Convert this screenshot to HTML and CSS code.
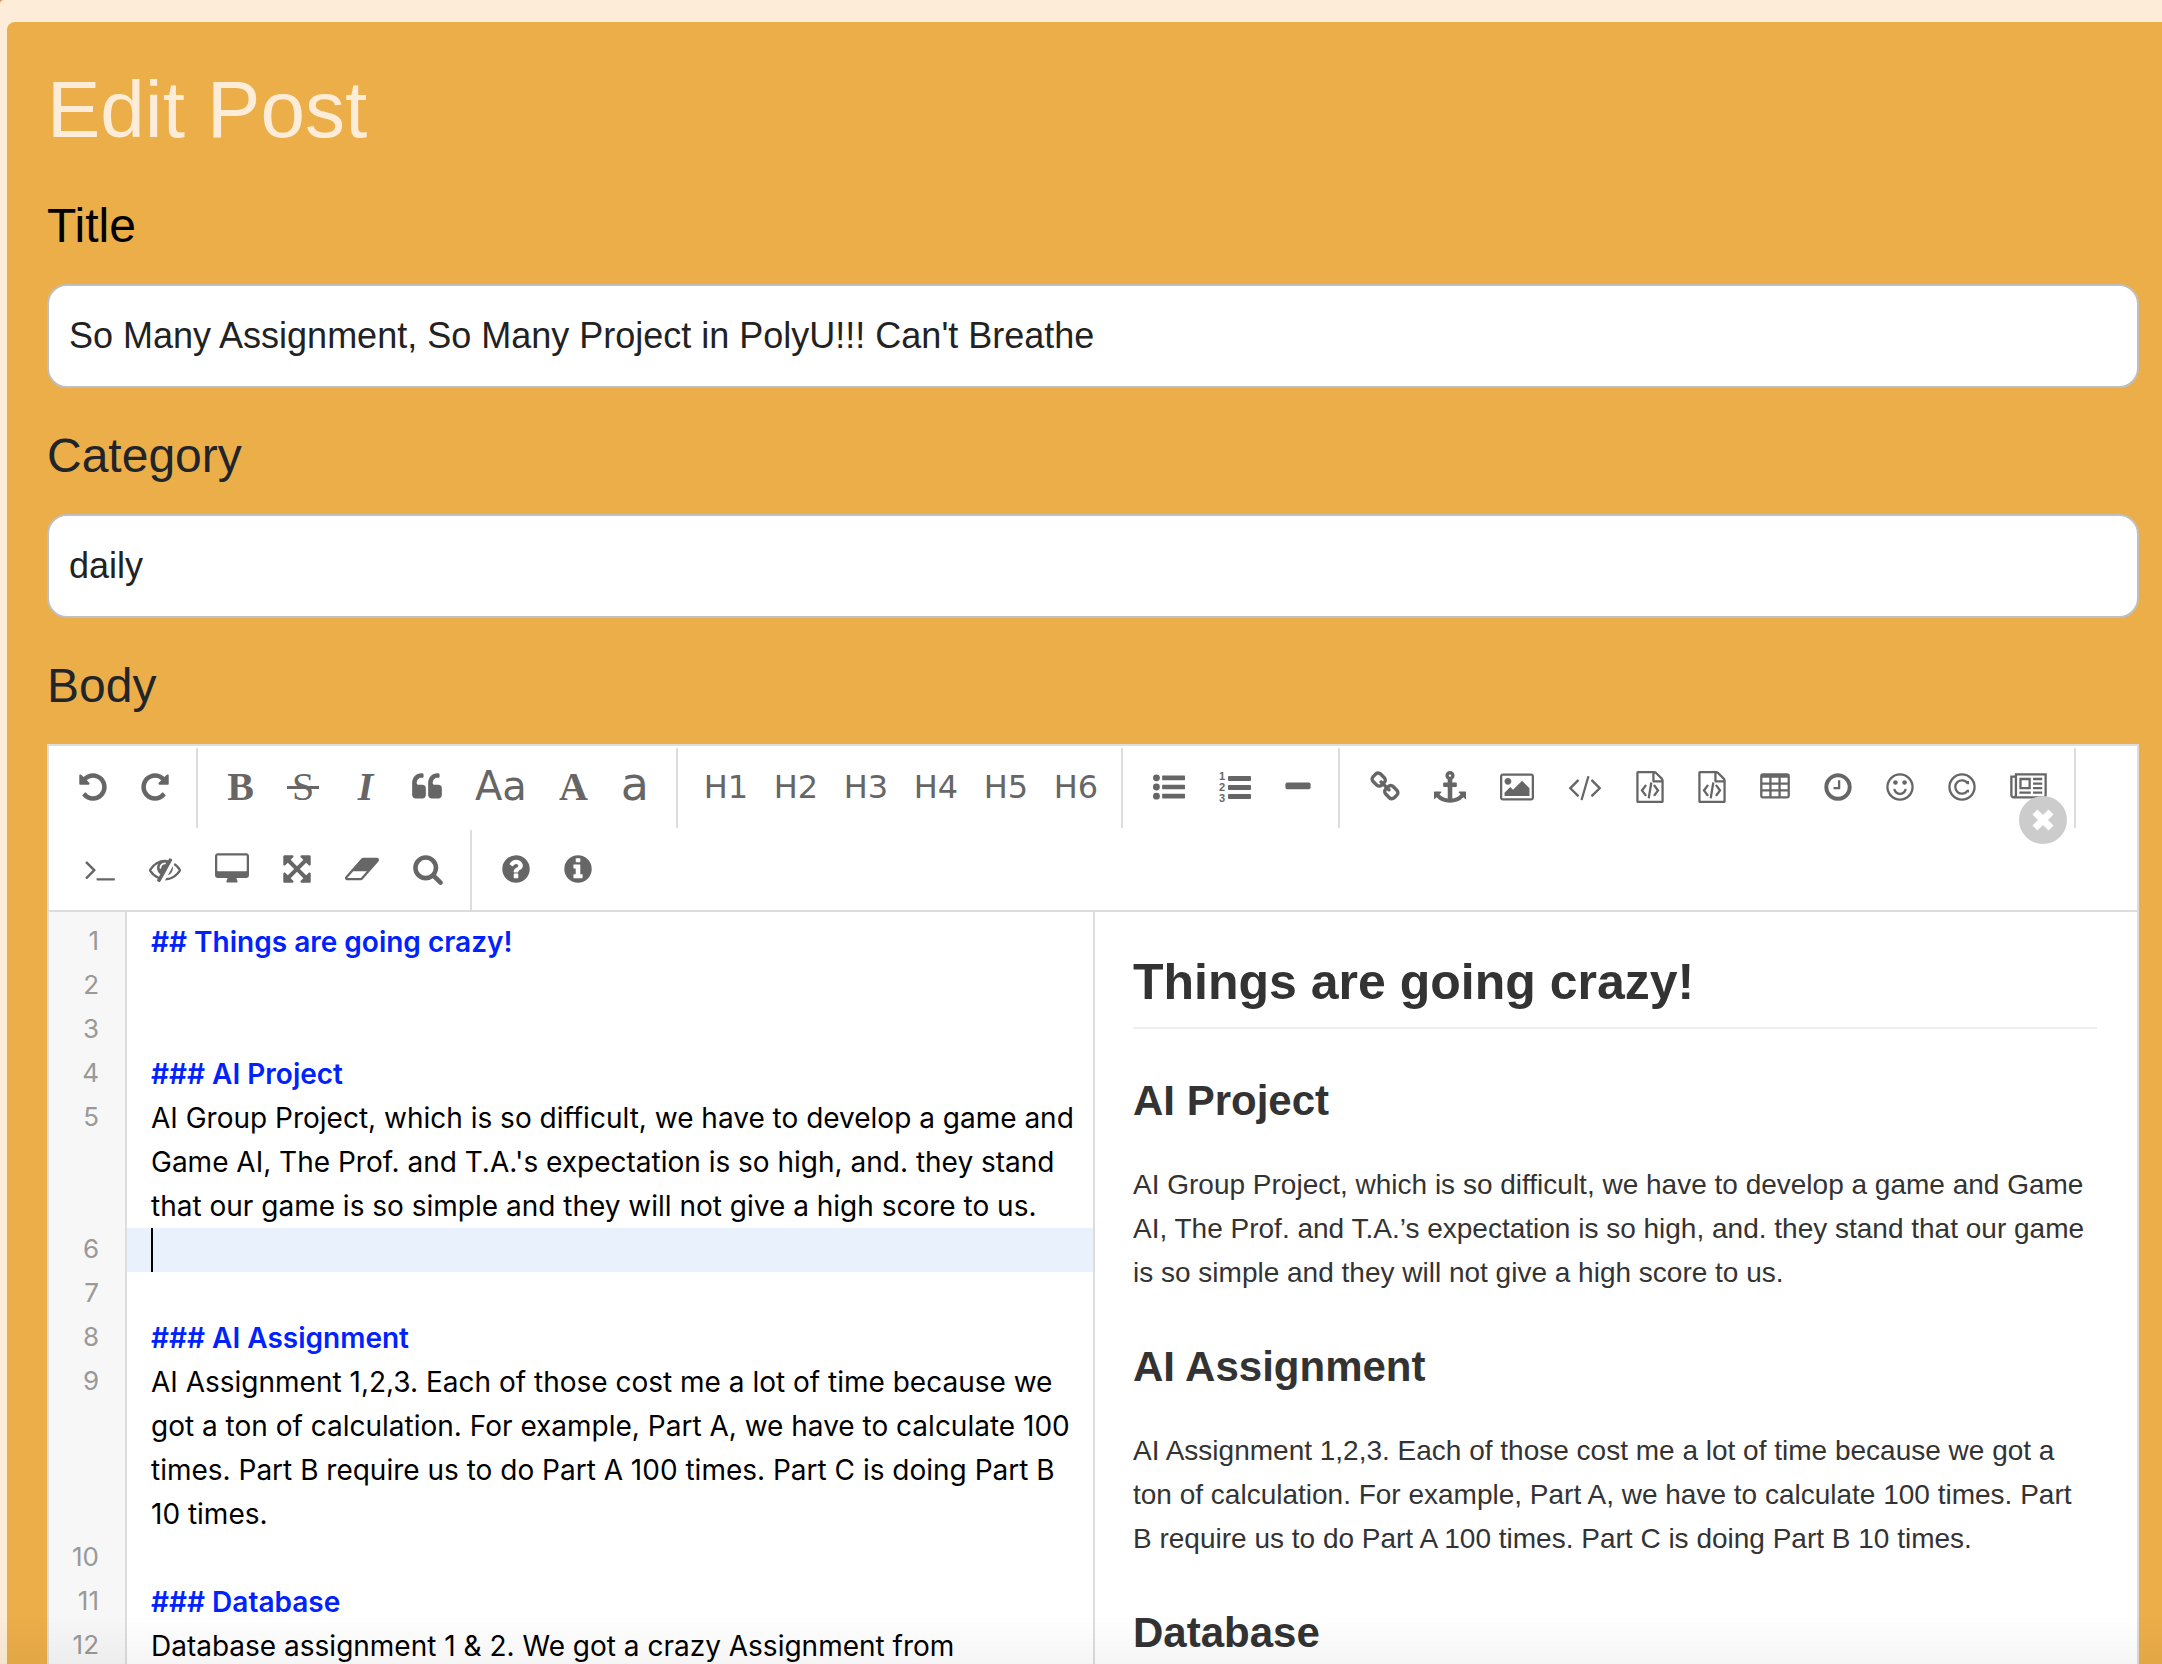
FILE: index.html
```html
<!DOCTYPE html>
<html lang="en">
<head>
<meta charset="utf-8">
<title>Edit Post</title>
<link rel="stylesheet" href="styles.css">
</head>
<body>
<div class="page">
<main class="card">
  <h1 class="card-heading">Edit Post</h1>
  <form class="post-form">
    <label class="field-label field-label--title" for="title">Title</label>
    <input class="field-input" id="title" type="text" value="So Many Assignment, So Many Project in PolyU!!! Can't Breathe">
    <label class="field-label" for="category">Category</label>
    <input class="field-input" id="category" type="text" value="daily">
    <h2 class="field-label">Body</h2>

    <section class="editor" aria-label="Body">
      <div class="toolbar" role="toolbar" aria-label="Formatting">
        <div class="group">
          <button type="button" class="tool" aria-label="Undo"><svg class="w28" viewBox="128 0 1536 1792"><path d="M1664 896q0 156-61 298t-164 245-245 164-298 61q-172 0-327-72.500t-264-204.500q-7-10-6.500-22.500t8.500-20.500l137-138q10-9 25-9 16 2 23 12 73 95 179 147t225 52q104 0 198.500-40.500t163.500-109.500 109.500-163.500 40.500-198.500-40.500-198.500-109.500-163.500-163.500-109.500-198.500-40.500q-98 0-188 35.500t-160 101.500l137 138q31 30 14 69-17 40-59 40h-448q-26 0-45-19t-19-45v-448q0-42 40-59 39-17 69 14l130 129q107-101 244.500-156.500t284.500-55.500q156 0 298 61t245 164 164 245 61 298z"/></svg></button>
          <button type="button" class="tool" aria-label="Redo"><svg class="w28" viewBox="128 0 1536 1792"><path d="M1664 256v448q0 26-19 45t-45 19h-448q-42 0-59-40-17-39 14-69l138-138q-148-137-349-137-104 0-198.500 40.500t-163.500 109.500-109.500 163.500-40.500 198.500 40.500 198.500 109.500 163.500 163.500 109.500 198.500 40.500q119 0 225-52t179-147q7-10 23-12 15 0 25 9l137 138q9 8 9.500 20.500t-7.500 22.500q-109 132-264 204.500t-327 72.500q-156 0-298-61t-245-164-164-245-61-298 61-298 164-245 245-164 298-61q147 0 284.500 55.500t244.500 156.500l130-129q29-31 70-14 39 17 39 59z"/></svg></button>
        </div>
        <div class="group">
          <button type="button" class="tool tool--serif" aria-label="Bold">B</button>
          <button type="button" class="tool tool--serif tool--strike" aria-label="Strikethrough">S</button>
          <button type="button" class="tool tool--serif tool--italic" aria-label="Italic">I</button>
          <button type="button" class="tool" aria-label="Quote"><svg class="w30" viewBox="64 0 1664 1792"><path d="M832 960v384q0 80-56 136t-136 56h-384q-80 0-136-56t-56-136v-704q0-104 40.500-198.500t109.500-163.500 163.500-109.500 198.500-40.500h64q26 0 45 19t19 45v128q0 26-19 45t-45 19h-64q-106 0-181 75t-75 181v32q0 40 28 68t68 28h224q80 0 136 56t56 136zm896 0v384q0 80-56 136t-136 56h-384q-80 0-136-56t-56-136v-704q0-104 40.500-198.500t109.500-163.500 163.500-109.500 198.500-40.500h64q26 0 45 19t19 45v128q0 26-19 45t-45 19h-64q-106 0-181 75t-75 181v32q0 40 28 68t68 28h224q80 0 136 56t56 136z"/></svg></button>
          <button type="button" class="tool tool--case" aria-label="Capitalize words">Aa</button>
          <button type="button" class="tool tool--serif" aria-label="Uppercase">A</button>
          <button type="button" class="tool tool--lower" aria-label="Lowercase">a</button>
        </div>
        <div class="group">
          <button type="button" class="tool tool--heading">H1</button>
          <button type="button" class="tool tool--heading">H2</button>
          <button type="button" class="tool tool--heading">H3</button>
          <button type="button" class="tool tool--heading">H4</button>
          <button type="button" class="tool tool--heading">H5</button>
          <button type="button" class="tool tool--heading">H6</button>
        </div>
        <div class="group">
          <button type="button" class="tool" aria-label="Bulleted list"><svg class="w32" viewBox="0 0 1792 1792"><circle cx="192" cy="384" r="192"/><circle cx="192" cy="896" r="192"/><circle cx="192" cy="1408" r="192"/><rect x="512" y="256" width="1280" height="256" rx="32"/><rect x="512" y="768" width="1280" height="256" rx="32"/><rect x="512" y="1280" width="1280" height="256" rx="32"/></svg></button>
          <button type="button" class="tool" aria-label="Numbered list"><svg class="w32" viewBox="0 0 32 32"><rect x="9" y="5" width="23" height="5" rx="1"/><rect x="9" y="14" width="23" height="5" rx="1"/><rect x="9" y="23" width="23" height="5" rx="1"/><text class="digit" x="0" y="9">1</text><text class="digit" x="0" y="20">2</text><text class="digit" x="0" y="31">3</text></svg></button>
          <button type="button" class="tool" aria-label="Horizontal rule"><svg class="w26" viewBox="192 0 1408 1792"><rect x="192" y="640" width="1408" height="384" rx="96"/></svg></button>
        </div>
        <div class="group">
          <button type="button" class="tool" aria-label="Link"><svg class="w30" viewBox="64 0 1664 1792"><path d="M1520 1216q0-40-28-68l-208-208q-28-28-68-28-42 0-72 32 3 3 19 18.500t21.500 21.500 15 19 13 25.500 3.500 27.500q0 40-28 68t-68 28q-15 0-27.500-3.500t-25.500-13-19-15-21.500-21.500-18.500-19q-33 31-33 73 0 40 28 68l206 207q27 27 68 27 40 0 68-26l147-146q28-28 28-67zm-703-705q0-40-28-68l-206-207q-28-28-68-28-39 0-68 27l-147 146q-28 28-28 67 0 40 28 68l208 208q27 27 68 27 42 0 72-31-3-3-19-18.500t-21.500-21.500-15-19-13-25.500-3.500-27.500q0-40 28-68t68-28q15 0 27.500 3.500t25.500 13 19 15 21.500 21.500 18.500 19q33-31 33-73zm895 705q0 120-85 203l-147 146q-83 83-203 83-121 0-204-85l-206-207q-83-83-83-203 0-123 88-209l-88-88q-86 88-208 88-120 0-204-84l-208-208q-84-84-84-204t85-203l147-146q83-83 203-83 121 0 204 85l206 207q83 83 83 203 0 123-88 209l88 88q86-88 208-88 120 0 204 84l208 208q84 84 84 204z"/></svg></button>
          <button type="button" class="tool" aria-label="Anchor"><svg class="w32" viewBox="0 0 1792 1792"><path d="M960 256q0-26-19-45t-45-19-45 19-19 45 19 45 45 19 45-19 19-45zm832 928v352q0 22-20 30-8 2-12 2-12 0-23-9l-93-93q-119 143-318.500 226.500t-429.500 83.500-429.500-83.500-318.500-226.500l-93 93q-9 9-23 9-4 0-12-2-20-8-20-30v-352q0-14 9-23t23-9h352q22 0 30 20 8 19-7 35l-100 100q67 91 189.500 153.500t271.500 82.500v-647h-192q-26 0-45-19t-19-45v-128q0-26 19-45t45-19h192v-163q-58-34-93-92.500t-35-128.500q0-106 75-181t181-75 181 75 75 181q0 70-35 128.500t-93 92.500v163h192q26 0 45 19t19 45v128q0 26-19 45t-45 19h-192v647q149-20 271.500-82.500t189.500-153.500l-100-100q-15-16-7-35 8-20 30-20h352q14 0 23 9t9 23z"/></svg></button>
          <button type="button" class="tool" aria-label="Image"><svg class="w34" viewBox="64 0 1920 1792"><path d="M704 576q0 80-56 136t-136 56-136-56-56-136 56-136 136-56 136 56 56 136zm1024 384v448h-1408v-192l320-320 160 160 512-512zm96-704h-1600q-13 0-22.500 9.500t-9.500 22.500v1216q0 13 9.500 22.500t22.500 9.500h1600q13 0 22.500-9.500t9.500-22.500v-1216q0-13-9.500-22.500t-22.500-9.500zm160 32v1216q0 66-47 113t-113 47h-1600q-66 0-113-47t-47-113v-1216q0-66 47-113t113-47h1600q66 0 113 47t47 113z"/></svg></button>
          <button type="button" class="tool" aria-label="Inline code"><svg class="w34" viewBox="64 0 1920 1792"><path d="M681 1399l-50 50q-10 10-23 10t-23-10l-466-466q-10-10-10-23t10-23l466-466q10-10 23-10t23 10l50 50q10 10 10 23t-10 23l-393 393 393 393q10 10 10 23t-10 23zm591-1067l-373 1291q-4 13-15.500 19.500t-23.500 2.500l-62-17q-13-4-19.500-15.500t-2.500-24.500l373-1291q4-13 15.500-19.500t23.500-2.500l62 17q13 4 19.500 15.500t2.500 24.500zm657 651l-466 466q-10 10-23 10t-23-10l-50-50q-10-10-10-23t10-23l393-393-393-393q-10-10-10-23t10-23l50-50q10-10 23-10t23 10l466 466q10 10 10 23t-10 23z"/></svg></button>
          <button type="button" class="tool" aria-label="Preformatted text"><svg class="w28" viewBox="128 0 1536 1792"><path id="file-code" d="M1596 380q28 28 48 76t20 88v1152q0 40-28 68t-68 28h-1344q-40 0-68-28t-28-68v-1600q0-40 28-68t68-28h896q40 0 88 20t76 48zm-444-244v376h376q-10-29-22-41l-313-313q-12-12-41-22zm384 1528v-1024h-416q-40 0-68-28t-28-68v-416h-768v1536h1280zm-928-896q8-11 21-12.500t24 6.500l51 38q11 8 12.500 21t-6.500 24l-182 243 182 243q8 11 6.500 24t-12.500 21l-51 38q-11 8-24 6.500t-21-12.500l-226-301q-14-19 0-38zm802 301q14 19 0 38l-226 301q-8 11-21 12.500t-24-6.500l-51-38q-11-8-12.500-21t6.500-24l182-243-182-243q-8-11-6.500-24t12.500-21l51-38q11-8 24-6.500t21 12.500zm-620 461q-13-2-20.500-13t-5.500-24l138-831q2-13 13-20.500t24-5.500l63 10q13 2 20.500 13t5.500 24l-138 831q-2 13-13 20.500t-24 5.500z"/></svg></button>
          <button type="button" class="tool" aria-label="Code block"><svg class="w28" viewBox="128 0 1536 1792"><use href="#file-code"/></svg></button>
          <button type="button" class="tool" aria-label="Table"><svg class="w30" viewBox="64 0 1664 1792"><path fill-rule="evenodd" d="M224 128h1344q160 0 160 160v1088q0 160-160 160h-1344q-160 0-160-160v-1088q0-160 160-160zM192 384v256h384v-256zM704 384v256h384v-256zM1216 384v256h384v-256zM192 768v256h384v-256zM704 768v256h384v-256zM1216 768v256h384v-256zM192 1152v256h384v-256zM704 1152v256h384v-256zM1216 1152v256h384v-256z"/></svg></button>
          <button type="button" class="tool" aria-label="Date and time"><svg class="w28" viewBox="128 0 1536 1792"><path d="M1024 544v448q0 14-9 23t-23 9h-320q-14 0-23-9t-9-23v-64q0-14 9-23t23-9h224v-352q0-14 9-23t23-9h64q14 0 23 9t9 23zm416 352q0-148-73-273t-198-198-273-73-273 73-198 198-73 273 73 273 198 198 273 73 273-73 198-198 73-273zm224 0q0 209-103 385.500t-279.500 279.500-385.500 103-385.500-103-279.500-279.500-103-385.500 103-385.500 279.500-279.500 385.500-103 385.500 103 279.500 279.500 103 385.500z"/></svg></button>
          <button type="button" class="tool" aria-label="Emoji"><svg class="w28" viewBox="128 0 1536 1792"><circle class="ring" cx="896" cy="896" r="704"/><circle cx="640" cy="640" r="128"/><circle cx="1152" cy="640" r="128"/><path d="M1262 1075q-37 121-138 195t-228 74-228-74-138-195q-8-25 4-48.500t38-31.500q25-8 48.500 4t31.500 38q25 80 92.500 129.500t151.500 49.500 151.500-49.500 92.500-129.500q8-26 32-38t49-4 37 31.500 4 48.500z"/></svg></button>
          <button type="button" class="tool" aria-label="HTML entities"><svg class="w28" viewBox="128 0 1536 1792"><circle class="ring" cx="896" cy="896" r="704"/><path class="ring" d="M1210 690a376 376 0 1 0 0 412M1226 560v180M1226 1052v150"/></svg></button>
          <button type="button" class="tool" aria-label="Page break"><svg class="w37" viewBox="0 0 2048 1792"><path d="M1024 512h-384v384h384v-384zm128 640v128h-640v-128h640zm0-768v640h-640v-640h640zm640 768v128h-512v-128h512zm0-256v128h-512v-128h512zm0-256v128h-512v-128h512zm0-256v128h-512v-128h512zm-1536 960v-960h-128v960q0 26 19 45t45 19 45-19 19-45zm1664 0v-1088h-1536v1088q0 33-11 64h1483q26 0 45-19t19-45zm128-1216v1216q0 80-56 136t-136 56h-1664q-80 0-136-56t-56-136v-1088h256v-128h1792z"/></svg></button>
        </div>
        <div class="group group--view">
          <button type="button" class="tool" aria-label="Go to line"><svg class="w30" viewBox="64 0 1664 1792"><path d="M649 983l-466 466q-10 10-23 10t-23-10l-50-50q-10-10-10-23t10-23l393-393-393-393q-10-10-10-23t10-23l50-50q10-10 23-10t23 10l466 466q10 10 10 23t-10 23zm1079 457v64q0 14-9 23t-23 9h-960q-14 0-23-9t-9-23v-64q0-14 9-23t23-9h960q14 0 23 9t9 23z"/></svg></button>
          <button type="button" class="tool" aria-label="Hide live preview"><svg class="w32" viewBox="0 0 1792 1792"><path d="M555 1335l78-141q-87-63-136-159t-49-203q0-121 61-225-229 117-381 353 167 258 427 375zm389-759q0-20-14-34t-34-14q-125 0-214.500 89.500t-89.500 214.500q0 20 14 34t34 14 34-14 14-34q0-86 61-147t147-61q20 0 34-14t14-34zm363-191q0 7-1 9-106 189-316 567t-315 566l-49 89q-10 16-28 16-12 0-134-70-16-10-16-28 0-12 44-87-143-65-263.500-173t-208.500-245q-20-31-20-69t20-69q153-235 380-371t496-136q89 0 180 17l54-97q10-16 28-16 5 0 18 6t31 15.500 33 18.500 31.500 18.500 19.500 11.500q16 10 16 27zm37 447q0 139-79 253.500t-209 164.500l280-502q8 45 8 84zm448 128q0 35-20 69-39 64-109 145-150 172-347.500 267t-419.500 95l74-132q212-18 392.500-137t301.500-307q-115-179-282-294l63-112q95 64 182.500 153t144.500 184q20 34 20 69z"/></svg></button>
          <button type="button" class="tool" aria-label="Full preview"><svg class="w34" viewBox="64 0 1920 1792"><path d="M1856 992v-832q0-13-9.500-22.500t-22.500-9.500h-1600q-13 0-22.500 9.500t-9.500 22.500v832q0 13 9.500 22.500t22.500 9.500h1600q13 0 22.500-9.500t9.500-22.500zm128-832v1088q0 66-47 113t-113 47h-544q0 37 16 77.500t32 71 16 43.500q0 26-19 45t-45 19h-512q-26 0-45-19t-19-45q0-14 16-44t32-70 16-78h-544q-66 0-113-47t-47-113v-1088q0-66 47-113t113-47h1600q66 0 113 47t47 113z"/></svg></button>
          <button type="button" class="tool" aria-label="Fullscreen"><svg class="w28" viewBox="128 0 1536 1792"><path d="M1411 541l-355 355 355 355 144-144q29-31 70-14 39 17 39 59v448q0 26-19 45t-45 19h-448q-42 0-59-40-17-39 14-69l144-144-355-355-355 355 144 144q31 30 14 69-17 40-59 40h-448q-26 0-45-19t-19-45v-448q0-42 40-59 39-17 69 14l144 144 355-355-355-355-144 144q-19 19-45 19-12 0-24-5-40-17-40-59v-448q0-26 19-45t45-19h448q42 0 59 40 17 39-14 69l-144 144 355 355 355-355-144-144q-31-30-14-69 17-40 59-40h448q26 0 45 19t19 45v448q0 42-39 59-13 5-25 5-26 0-45-19z"/></svg></button>
          <button type="button" class="tool" aria-label="Clear"><svg class="w34" viewBox="64 0 1920 1792"><path d="M960 1408l336-384h-768l-336 384h768zm1013-1077q15 34 9.500 71.500t-30.500 65.500l-896 1024q-38 44-96 44h-768q-38 0-69.500-20.500t-47.500-54.500q-15-34-9.500-71.500t30.500-65.500l896-1024q38-44 96-44h768q38 0 69.500 20.500t47.500 54.500z"/></svg></button>
          <button type="button" class="tool" aria-label="Search"><svg class="w30" viewBox="64 0 1664 1792"><path d="M1216 832q0-185-131.500-316.500t-316.500-131.500-316.500 131.500-131.500 316.500 131.500 316.500 316.500 131.500 316.500-131.500 131.500-316.500zm512 832q0 52-38 90t-90 38q-54 0-90-38l-343-342q-179 124-399 124-143 0-273.500-55.500t-225-150-150-225-55.500-273.500 55.500-273.500 150-225 225-150 273.500-55.500 273.500 55.500 225 150 150 225 55.500 273.500q0 220-124 399l343 343q37 37 37 90z"/></svg></button>
        </div>
        <div class="group group--last">
          <button type="button" class="tool" aria-label="Help"><svg class="w28" viewBox="128 0 1536 1792"><path fill-rule="evenodd" d="M1024 1376v-192q0-14-9-23t-23-9h-192q-14 0-23 9t-9 23v192q0 14 9 23t23 9h192q14 0 23-9t9-23zm256-672q0-88-55.500-163t-138.500-116-170-41q-243 0-371 213-15 24 8 42l132 100q7 6 19 6 16 0 25-12 53-68 86-92 34-24 86-24 48 0 85.500 26t37.500 59q0 38-20 61t-68 45q-63 28-115.500 86.500t-52.500 125.500v36q0 14 9 23t23 9h192q14 0 23-9t9-23q0-19 21.500-49.500t54.500-49.500q32-18 49-28.500t46-35 44.500-48 28-60.500 12.500-81zM1664 896a768 768 0 1 1-1536 0a768 768 0 1 1 1536 0z"/></svg></button>
          <button type="button" class="tool" aria-label="About"><svg class="w28" viewBox="128 0 1536 1792"><path fill-rule="evenodd" d="M1152 1376v-160q0-14-9-23t-23-9h-96v-512q0-14-9-23t-23-9h-320q-14 0-23 9t-9 23v160q0 14 9 23t23 9h96v320h-96q-14 0-23 9t-9 23v160q0 14 9 23t23 9h448q14 0 23-9t9-23zm-128-896v-160q0-14-9-23t-23-9h-192q-14 0-23 9t-9 23v160q0 14 9 23t23 9h192q14 0 23-9t9-23zM1664 896a768 768 0 1 1-1536 0a768 768 0 1 1 1536 0z"/></svg></button>
        </div>
        <button type="button" class="close" aria-label="Close preview"><svg viewBox="0 0 24 24"><path d="M4 4L20 20M20 4L4 20"/></svg></button>
      </div>

      <div class="panes">
        <ol class="code">
          <li class="row"><span class="num">1</span><b class="line mark">## Things are going crazy!</b></li>
          <li class="row"><span class="num">2</span><span class="line"></span></li>
          <li class="row"><span class="num">3</span><span class="line"></span></li>
          <li class="row"><span class="num">4</span><b class="line mark">### AI Project</b></li>
          <li class="row"><span class="num">5</span><span class="line">AI Group Project, which is so difficult, we have to develop a game and Game AI, The Prof. and T.A.'s expectation is so high, and. they stand that our game is so simple and they will not give a high score to us.</span></li>
          <li class="row"><span class="num">6</span><span class="line line--active"><span class="caret"></span></span></li>
          <li class="row"><span class="num">7</span><span class="line"></span></li>
          <li class="row"><span class="num">8</span><b class="line mark">### AI Assignment</b></li>
          <li class="row"><span class="num">9</span><span class="line">AI Assignment 1,2,3. Each of those cost me a lot of time because we got a ton of calculation. For example, Part A, we have to calculate 100 times. Part B require us to do Part A 100 times. Part C is doing Part B 10 times.</span></li>
          <li class="row"><span class="num">10</span><span class="line"></span></li>
          <li class="row"><span class="num">11</span><b class="line mark">### Database</b></li>
          <li class="row"><span class="num">12</span><span class="line">Database assignment 1 &amp; 2. We got a crazy Assignment from</span></li>
        </ol>
        <article class="preview">
          <h2>Things are going crazy!</h2>
          <h3>AI Project</h3>
          <p>AI Group Project, which is so difficult, we have to develop a game and Game AI, The Prof. and T.A.’s expectation is so high, and. they stand that our game is so simple and they will not give a high score to us.</p>
          <h3>AI Assignment</h3>
          <p>AI Assignment 1,2,3. Each of those cost me a lot of time because we got a ton of calculation. For example, Part A, we have to calculate 100 times. Part B require us to do Part A 100 times. Part C is doing Part B 10 times.</p>
          <h3>Database</h3>
        </article>
      </div>
    </section>
  </form>
</main>
</div>
</body>
</html>
```
FILE: styles.css
```css
* { box-sizing: border-box; }

body {
  margin: 0;
  height: 100vh;
  overflow: hidden;
  background: #dc8c4c;
  color: #212529;
  font-family: "Liberation Sans", Arial, sans-serif;
}

/* soft shade along the lower window edge */
body::after {
  content: "";
  position: fixed;
  inset: auto 0 0 0;
  height: 48px;
  background: linear-gradient(rgba(0, 0, 0, 0), rgba(0, 0, 0, .04));
  pointer-events: none;
}

.page {
  height: 100%;
  padding: 22px 0 0 7px;
  background: #fdedd8;
  border-top-left-radius: 4px;
}

.card {
  display: flex;
  flex-direction: column;
  height: 100%;
  padding: 40px 23px 0 40px;
  background: #ecae49;
  border-top-left-radius: 8px;
}

.card-heading {
  margin: 0;
  color: #fdedd8;
  font-size: 80px;
  font-weight: 400;
  line-height: 96px;
}

.post-form {
  display: flex;
  flex: 1;
  flex-direction: column;
  min-height: 0;
}

.field-label {
  margin: 39px 0 29px;
  font-size: 48px;
  font-weight: 400;
  line-height: 58px;
}

.field-label--title { color: #000; }

.field-input {
  width: 100%;
  height: 104px;
  padding: 0 20px;
  border: 2px solid #bfbfbf;
  border-radius: 20px;
  background: #fff;
  color: #222;
  font: 36px "Liberation Sans", Arial, sans-serif;
}

.editor {
  display: flex;
  flex: 1;
  flex-direction: column;
  min-height: 0;
  border: 2px solid #ddd;
  border-bottom: 0;
  background: #fff;
}

.toolbar {
  position: relative;
  display: flex;
  flex-wrap: wrap;
  row-gap: 2px;
  padding-top: 2px;
  border-bottom: 2px solid #ddd;
}

.group {
  display: flex;
  gap: 2px;
  height: 80px;
  padding: 0 11px 0 14px;
  border-right: 2px solid #ddd;
}

.group--view { padding-left: 20px; }
.group--last { border-right: 0; }

.tool {
  display: flex;
  align-items: center;
  justify-content: center;
  min-width: 57px;
  padding: 0 16px 3px;
  border: 0;
  background: none;
  color: #666;
  font: 32px/40px "DejaVu Sans", Verdana, sans-serif;
}

.tool svg { height: 32px; fill: currentColor; }
.tool .ring { fill: none; stroke: currentColor; stroke-width: 128; }
.tool .digit { font: bold 11px "Liberation Sans", Arial, sans-serif; }
.w26 { width: 26px; }
.w28 { width: 28px; }
.w30 { width: 30px; }
.w32 { width: 32px; }
.w34 { width: 34px; }
.w37 { width: 37px; }

.tool--serif {
  padding: 0 15px 3px;
  font: bold 40px/40px "Liberation Serif", "Times New Roman", serif;
}

.tool--strike {
  min-width: 64px;
  font-weight: 400;
  background: linear-gradient(#666, #666) center 38px / 32px 3px no-repeat;
}

.tool--italic { font-style: italic; }
.tool--case { padding: 0 15px 5px; font-size: 40px; }
.tool--lower { padding: 0 16px 8px; font-size: 46px; }
.tool--heading { width: 68px; padding: 0 0 3px; }

.close {
  position: absolute;
  right: 70px;
  bottom: 66px;
  display: flex;
  align-items: center;
  justify-content: center;
  width: 48px;
  height: 48px;
  padding: 0;
  border: 0;
  border-radius: 50%;
  background: #ccc;
}

.close svg {
  width: 24px;
  height: 24px;
  fill: none;
  stroke: #fff;
  stroke-width: 7;
}

.panes {
  display: grid;
  flex: 1;
  grid-template-columns: 1fr 1fr;
  min-height: 0;
  overflow: hidden;
}

.code {
  margin: 0;
  padding: 8px 0 0;
  background: linear-gradient(90deg, #f7f7f7 76px, #ddd 76px, #ddd 78px, #fff 78px);
  color: #000;
  font: 28px/44px Inter, "Noto Sans", sans-serif;
  list-style: none;
}

.row {
  display: grid;
  grid-template-columns: 78px 1fr;
}

.num {
  padding-right: 28px;
  color: #999;
  font-size: 26px;
  line-height: 42px;
  text-align: right;
}

.line {
  min-height: 44px;
  padding: 0 12px 0 24px;
}

.line--active { background: #e9f1fd; }

.caret {
  display: block;
  width: 2px;
  height: 44px;
  background: #000;
}

.mark {
  color: #0022ff;
  font-weight: 600;
}

.preview {
  padding: 40px 40px 0 38px;
  border-left: 2px solid #ddd;
  color: #333;
  font-size: 28px;
  line-height: 44px;
}

.preview h2 {
  margin: 0;
  padding-bottom: 15px;
  border-bottom: 2px solid #eee;
  font-size: 50px;
  line-height: 60px;
}

.preview h3 {
  margin: 42px 0 32px;
  font-size: 42px;
  line-height: 60px;
}

.preview p { margin: 0; }
```
